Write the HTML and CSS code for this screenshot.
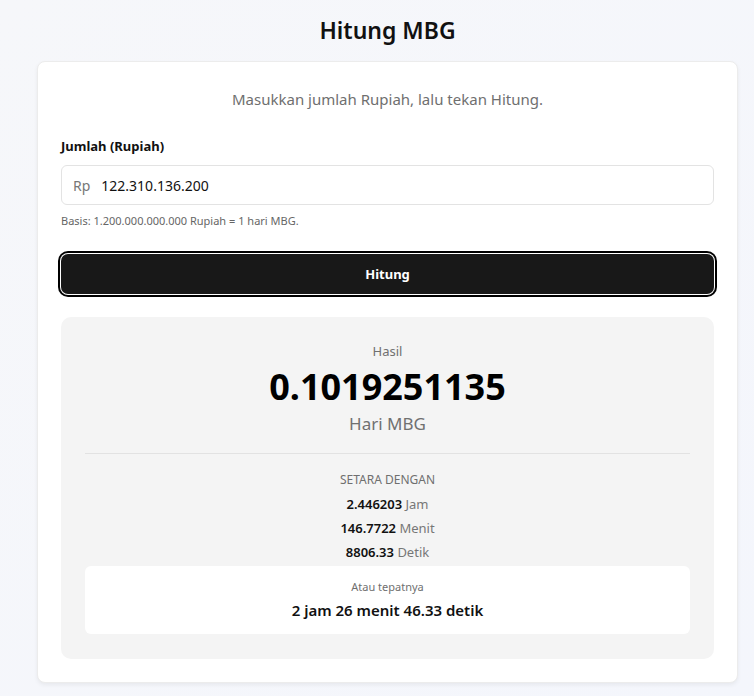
FILE: index.html
```html
<!DOCTYPE html>
<html lang="id">
<head>
<meta charset="utf-8">
<title>Hitung MBG</title>
<link rel="stylesheet" href="styles.css">
</head>
<body>
<main class="page">
  <h1 class="title">Hitung MBG</h1>
  <section class="card">
    <p class="intro">Masukkan jumlah Rupiah, lalu tekan Hitung.</p>
    <label class="label" for="amount">Jumlah (Rupiah)</label>
    <div class="input">
      <span class="prefix">Rp</span>
      <span class="value" id="amount">122.310.136.200</span>
    </div>
    <p class="hint">Basis: 1.200.000.000.000 Rupiah = 1 hari MBG.</p>
    <button class="btn">Hitung</button>
    <div class="result">
      <div class="res-label">Hasil</div>
      <div class="res-num">0.1019251135</div>
      <div class="res-unit">Hari MBG</div>
      <hr class="divider">
      <div class="eq-title">SETARA DENGAN</div>
      <div class="eq-row"><b>2.446203</b> Jam</div>
      <div class="eq-row"><b>146.7722</b> Menit</div>
      <div class="eq-row"><b>8806.33</b> Detik</div>
      <div class="exact">
        <div class="exact-label">Atau tepatnya</div>
        <div class="exact-val">2 jam 26 menit 46.33 detik</div>
      </div>
    </div>
  </section>
</main>
</body>
</html>
```
FILE: styles.css
```css
* { box-sizing: border-box; }
html, body { margin: 0; }
body {
  font-family: "Noto Sans", "Open Sans", sans-serif;
  background: linear-gradient(135deg, #f6f7fa 0%, #f4f6fc 100%);
  color: #111;
  min-height: 696px;
}
.page {
  width: 701px;
  margin: 0 auto 0 37px;
  padding-top: 13px;
}
.title {
  margin: 0 0 14px;
  text-align: center;
  font-size: 23px;
  font-weight: 600;
  line-height: 34px;
  color: #111;
}
.card {
  background: #fff;
  border: 1px solid #ececec;
  border-radius: 8px;
  box-shadow: 0 2px 4px rgba(0,0,0,0.06);
  padding: 24px 23px 23px;
}
.intro {
  margin: 0 0 24px;
  text-align: center;
  color: #6f6f6f;
  font-size: 15px;
  line-height: 26px;
}
.label {
  display: block;
  font-size: 13px;
  font-weight: 700;
  line-height: 20px;
  margin-bottom: 9px;
}
.input {
  display: flex;
  align-items: center;
  height: 40px;
  border: 1px solid #e3e3e3;
  border-radius: 6px;
  padding: 0 11px;
  font-size: 14px;
}
.prefix { color: #777; margin-right: 11px; }
.value { color: #111; }
.hint {
  margin: 8px 0 25px;
  font-size: 11px;
  color: #666;
  line-height: 16px;
}
.btn {
  display: block;
  width: 100%;
  height: 40px;
  background: #181818;
  color: #fff;
  font-family: inherit;
  font-size: 13px;
  font-weight: 700;
  border: none;
  border-radius: 7px;
  box-shadow: 0 0 0 1px #fff, 0 0 0 3px #000;
  margin-bottom: 23px;
}
.result {
  background: #f4f4f4;
  border-radius: 10px;
  padding: 24px 24px 25px;
  text-align: center;
}
.res-label { font-size: 13px; color: #707070; line-height: 20px; margin-bottom: 1px; }
.res-num { font-size: 36px; font-weight: 700; line-height: 50px; color: #000; }
.res-unit { font-size: 17px; color: #707070; line-height: 24px; }
.divider { border: none; border-top: 1px solid #e2e2e2; margin: 17px 0 17px; }
.eq-title { font-size: 12px; color: #6f6f6f; line-height: 18px; margin-bottom: 3px; }
.eq-row { font-size: 13px; line-height: 24px; color: #777; }
.eq-row b { color: #111; font-weight: 600; }
.exact {
  margin-top: 2px;
  background: #fff;
  border-radius: 6px;
  padding: 12px 12px 13px;
}
.exact-label { font-size: 11px; color: #6f6f6f; line-height: 18px; margin-bottom: 3px; }
.exact-val { font-size: 15px; font-weight: 600; color: #111; line-height: 22px; }
```
